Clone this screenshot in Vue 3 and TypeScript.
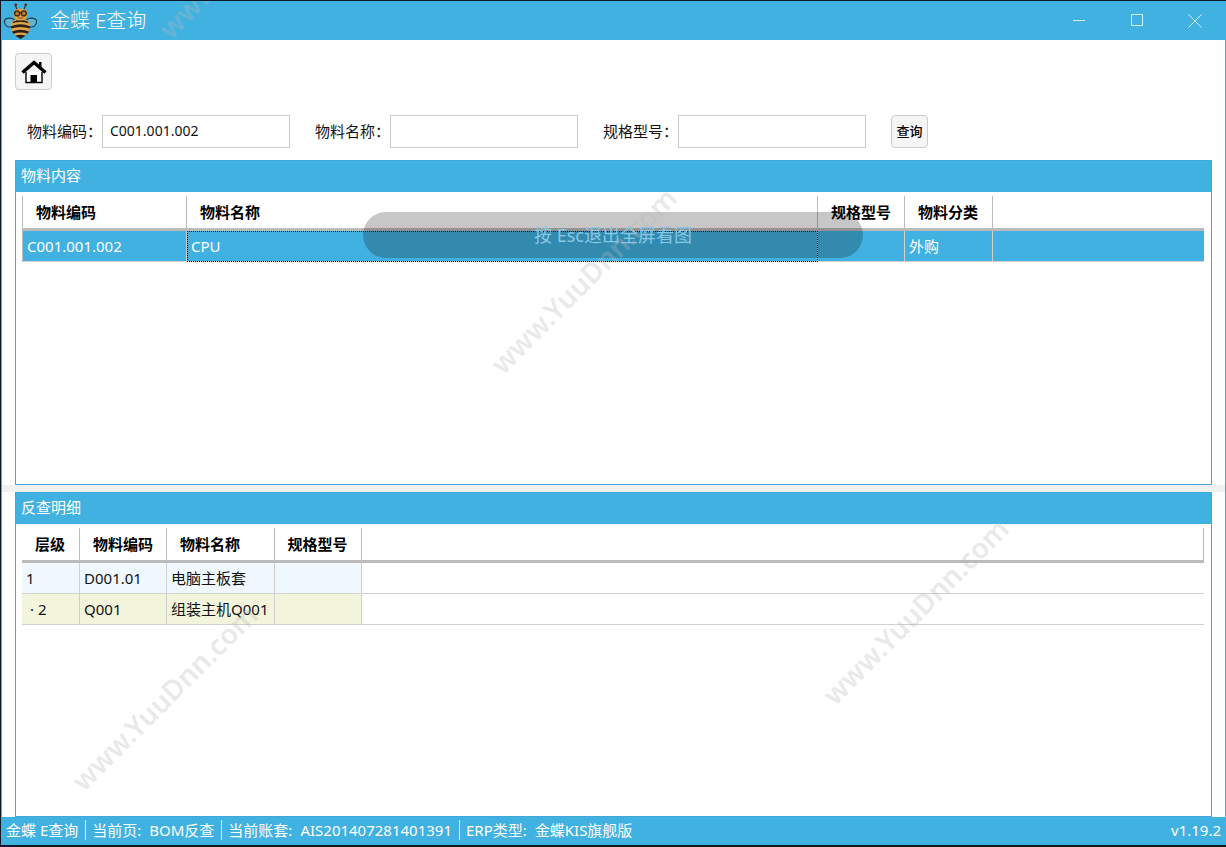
<script setup lang="ts">
import { ref } from 'vue'

interface Material {
  code: string
  name: string
  spec: string
  category: string
}

interface UsageRow {
  level: string
  code: string
  name: string
  spec: string
  tone: string
}

interface StatusItem {
  label: string
  value: string
}

const code = ref('C001.001.002')
const name = ref('')
const spec = ref('')

const materials: Material[] = [
  { code: 'C001.001.002', name: 'CPU', spec: '', category: '外购' },
]

const usages: UsageRow[] = [
  { level: '1', code: 'D001.01', name: '电脑主板套', spec: '', tone: 'blue' },
  { level: '· 2', code: 'Q001', name: '组装主机Q001', spec: '', tone: 'beige' },
]

const statusItems: StatusItem[] = [
  { label: '金蝶 E查询', value: '' },
  { label: '当前页:', value: 'BOM反查' },
  { label: '当前账套:', value: 'AIS201407281401391' },
  { label: 'ERP类型:', value: '金蝶KIS旗舰版' },
]

const marks = ['top', 'middle', 'right', 'left']
</script>

<template>
  <div class="window">
    <header class="titlebar">
      <svg class="bee" viewBox="0 0 40 40" aria-hidden="true">
        <g fill="none" stroke="#3a2c1c" stroke-width="1.2">
          <path d="M17 9 Q16 6 15 4M24 9 Q25 6 26 4" />
        </g>
        <circle cx="15.500" cy="3.500" r="1.500" fill="#4b3413" />
        <circle cx="26" cy="3.500" r="1.500" fill="#4b3413" />
        <path d="M14 19C8 16 2 18 4 23C6 28 12 28 15 24ZM27 19C33 16 39 18 37 23C35 28 29 28 26 24Z" fill="#5fb4d4" stroke="#1f3e4c" stroke-width="1.2" />
        <path d="M20.500 18C29 18 32 24 30 30C28 35 23 37 20.500 39C18 37 13 35 11 30C9 24 12 18 20.500 18Z" fill="#e2a548" />
        <path d="M13 21Q20.500 18 28 21L29 23Q20.500 20 12 23ZM10.500 26Q20.500 22 30.500 26V28.500Q20.500 25 10.500 28.500ZM11.500 31.500Q20.500 28 29.500 31.500L28 34Q20.500 31 13 34ZM15 36Q20.500 34 26 36L20.500 39.500Z" fill="#2b2118" />
        <path d="M13 12C13 6 28 6 28 12C28 17 25 20 20.500 20C16 20 13 17 13 12Z" fill="#e0a03e" />
        <path d="M13.500 12H27.500" stroke="#322416" stroke-width="1.3" />
        <g fill="#b9782a" stroke="#322416" stroke-width="1.3">
          <circle cx="17" cy="12.500" r="2.600" />
          <circle cx="24" cy="12.500" r="2.600" />
        </g>
        <path d="M18 17Q20.500 18.500 23 17" fill="none" stroke="#75420f" />
      </svg>
      <h1>金蝶 E查询</h1>
      <div class="controls">
        <button type="button" aria-label="最小化">
          <svg viewBox="0 0 14 14"><path d="M1 6.500H13" /></svg>
        </button>
        <button type="button" aria-label="最大化">
          <svg viewBox="0 0 14 14"><path d="M1.500 0.500H12.500V11.500H1.500Z" /></svg>
        </button>
        <button type="button" aria-label="关闭">
          <svg viewBox="0 0 14 14"><path d="M0.500 0.500L13.500 13.500M13.500 0.500L0.500 13.500" /></svg>
        </button>
      </div>
    </header>

    <main class="content">
      <div class="toolbar">
        <button class="home" type="button" aria-label="主页">
          <svg viewBox="0 0 26 26" aria-hidden="true">
            <path d="M5 13V23.500H21V13" fill="#fff" stroke="#000" stroke-width="1.400" />
            <path d="M18 3H20.500V9L18 6.500Z" fill="#000" />
            <path d="M1.500 13.500L13 3.500L24.500 13.500" fill="none" stroke="#000" stroke-width="3.400" />
            <path d="M9.500 16H16V24H9.500Z" fill="#000" />
          </svg>
        </button>
      </div>

      <form class="search" @submit.prevent>
        <div class="field">
          <label for="code">物料编码：</label>
          <input id="code" v-model="code" type="text">
        </div>
        <div class="field">
          <label for="name">物料名称：</label>
          <input id="name" v-model="name" type="text">
        </div>
        <div class="field">
          <label for="spec">规格型号：</label>
          <input id="spec" v-model="spec" type="text">
        </div>
        <button class="query" type="submit">查询</button>
      </form>

      <section class="panel">
        <h2>物料内容</h2>
        <div class="panel-body">
          <table class="materials">
            <colgroup>
              <col class="col-code">
              <col class="col-name">
              <col class="col-spec">
              <col class="col-category">
              <col>
            </colgroup>
            <thead>
              <tr>
                <th>物料编码</th>
                <th>物料名称</th>
                <th>规格型号</th>
                <th>物料分类</th>
                <th class="rest"></th>
              </tr>
            </thead>
            <tbody>
              <tr v-for="item in materials" :key="item.code" class="selected">
                <td>{{ item.code }}</td>
                <td class="focused">{{ item.name }}</td>
                <td>{{ item.spec }}</td>
                <td>{{ item.category }}</td>
                <td class="rest"></td>
              </tr>
            </tbody>
          </table>
        </div>
      </section>

      <div class="splitter"></div>

      <section class="panel">
        <h2>反查明细</h2>
        <div class="panel-body">
          <table class="usages">
            <thead>
              <tr>
                <th>层级</th>
                <th>物料编码</th>
                <th>物料名称</th>
                <th>规格型号</th>
                <th class="rest"></th>
              </tr>
            </thead>
            <tbody>
              <tr v-for="row in usages" :key="row.code" :class="row.tone">
                <td :class="{ nested: row.level !== '1' }">{{ row.level }}</td>
                <td>{{ row.code }}</td>
                <td>{{ row.name }}</td>
                <td>{{ row.spec }}</td>
                <td class="rest"></td>
              </tr>
            </tbody>
          </table>
        </div>
      </section>
    </main>

    <footer class="statusbar">
      <div v-for="item in statusItems" :key="item.label" class="status">
        <span>{{ item.label }}</span>
        <span v-if="item.value">{{ item.value }}</span>
      </div>
      <span class="version">v1.19.2</span>
    </footer>

    <div class="hint">按 Esc退出全屏看图</div>
    <div class="marks" aria-hidden="true">
      <span v-for="mark in marks" :key="mark" :class="['mark', mark]">www.YuuDnn.com</span>
    </div>
  </div>
</template>

<style>
body {
  margin: 0;
}
</style>

<style scoped>
.window {
  position: relative;
  display: flex;
  flex-direction: column;
  box-sizing: border-box;
  min-height: 100vh;
  border: solid #0b1a26;
  border-width: 1px 0 2px 1px;
  background: #fff;
  color: #111;
  font: 15px/20px "Noto Sans", "Noto Sans CJK SC", sans-serif;
}

button,
input {
  box-sizing: border-box;
  margin: 0;
  padding: 0;
  color: inherit;
  font: inherit;
}

.titlebar {
  display: flex;
  align-items: center;
  height: 39px;
  padding-right: 2px;
  background: #41b1e1;
  color: #fff;
}

.bee {
  width: 38px;
  height: 39px;
}

h1 {
  margin: 0 auto 0 11px;
  font-size: 20px;
  font-weight: 300;
  line-height: 28px;
}

.controls {
  display: flex;
}

.controls button {
  display: flex;
  align-items: center;
  justify-content: center;
  width: 58px;
  height: 39px;
  border: 0;
  background: none;
}

.controls svg {
  width: 14px;
  height: 14px;
  fill: none;
  stroke: #d2f4ff;
  stroke-width: 1;
}

.content {
  display: flex;
  flex: 1;
  flex-direction: column;
  padding: 13px 13px 0;
  border: solid #41b1e1;
  border-width: 0 1px;
}

.toolbar {
  display: flex;
  margin-bottom: 25px;
}

.home {
  display: flex;
  align-items: center;
  justify-content: center;
  width: 37px;
  height: 37px;
  border: 1px solid #ccc;
  border-radius: 4px;
  background: #f5f5f5;
}

.home svg {
  width: 26px;
  height: 26px;
}

.search {
  display: flex;
  gap: 25px;
  margin: 0 0 12px 12px;
}

.field {
  display: flex;
  align-items: center;
}

.field label {
  width: 75px;
  padding-bottom: 2px;
  white-space: nowrap;
}

.field input {
  width: 188px;
  height: 33px;
  padding: 0 7px 2px;
  border: 1px solid #ccc;
  background: #fff;
  font-size: 14px;
}

.query {
  width: 37px;
  height: 33px;
  padding-bottom: 2px;
  border: 1px solid #ccc;
  border-radius: 4px;
  background: #f5f5f5;
  color: #000;
  font-size: 13px;
  font-weight: 500;
}

.panel {
  display: flex;
  flex: 1 1 0;
  flex-direction: column;
  border: 1px solid #41a7d8;
}

h2 {
  margin: 0;
  padding: 0 5px 3px;
  background: #41b1e1;
  color: #fff;
  font-size: 15px;
  font-weight: 400;
  line-height: 28px;
}

.panel-body {
  flex: 1;
  padding: 4px 7px 0 6px;
}

.splitter {
  height: 7px;
  margin: 0 -13px;
  background: #f0f0f0;
}

table {
  width: 100%;
  border-collapse: separate;
  border-spacing: 0;
}

th {
  box-sizing: border-box;
  height: 35px;
  padding: 0 13px;
  border-right: 1px solid #bbb;
  border-bottom: 3px solid #bbb;
  color: #000;
  font-weight: 700;
  text-align: left;
  white-space: nowrap;
}

td {
  box-sizing: border-box;
  height: 31px;
  padding: 0 4px;
  border-right: 1px solid #d0d0d0;
  border-bottom: 1px solid #d0d0d0;
  white-space: nowrap;
}

.rest {
  width: 100%;
  padding: 0;
}

td.rest {
  border-right: 0;
}

.materials {
  table-layout: fixed;
}

.materials th:first-child,
.materials td:first-child {
  border-left: 1px solid #bbb;
}

.col-code {
  width: 165px;
}

.col-name {
  width: 631px;
}

.col-spec {
  width: 87px;
}

.col-category {
  width: 88px;
}

.materials .rest {
  width: auto;
  border-right: 0;
}

.selected td {
  background: #41b1e1;
  color: #fff;
}

.selected .focused {
  outline: 1px dotted #000;
  outline-offset: -1px;
}

.usages td {
  padding-right: 5px;
  padding-bottom: 1px;
}

.usages th:first-child {
  padding-right: 14px;
}

.blue td:not(.rest) {
  background: #f0f8ff;
}

.beige td:not(.rest) {
  background: #f3f4dc;
}

td.nested {
  padding-left: 8px;
}

.statusbar {
  display: flex;
  align-items: center;
  box-sizing: border-box;
  height: 28px;
  padding: 0 5px 2px 0;
  background: #41b1e1;
  color: #fff;
}

.status {
  display: flex;
  gap: 8px;
  padding: 0 7px 0 6px;
  border-right: 1px solid #d9f1fb;
}

.status:first-child {
  padding-left: 5px;
}

.status:nth-child(4) {
  border-right: 0;
}

.version {
  margin-left: auto;
}

.hint {
  position: absolute;
  top: 211px;
  right: 1px;
  left: 0;
  width: 500px;
  margin: 0 auto;
  border-radius: 23px;
  background: rgba(0, 0, 0, 0.22);
  color: #86c8e6;
  font-size: 18px;
  line-height: 46px;
  text-align: center;
}

.marks {
  position: absolute;
  inset: 0;
  overflow: hidden;
  pointer-events: none;
}

.mark {
  position: absolute;
  color: rgba(185, 185, 185, 0.32);
  font-size: 28px;
  font-weight: 600;
  line-height: 32px;
  transform: translate(-50%, -50%) rotate(-45deg);
}

.top {
  top: -56px;
  left: 250px;
}

.middle {
  top: 279px;
  left: 582px;
}

.right {
  top: 610px;
  left: 914px;
}

.left {
  top: 696px;
  left: 163px;
}
</style>
